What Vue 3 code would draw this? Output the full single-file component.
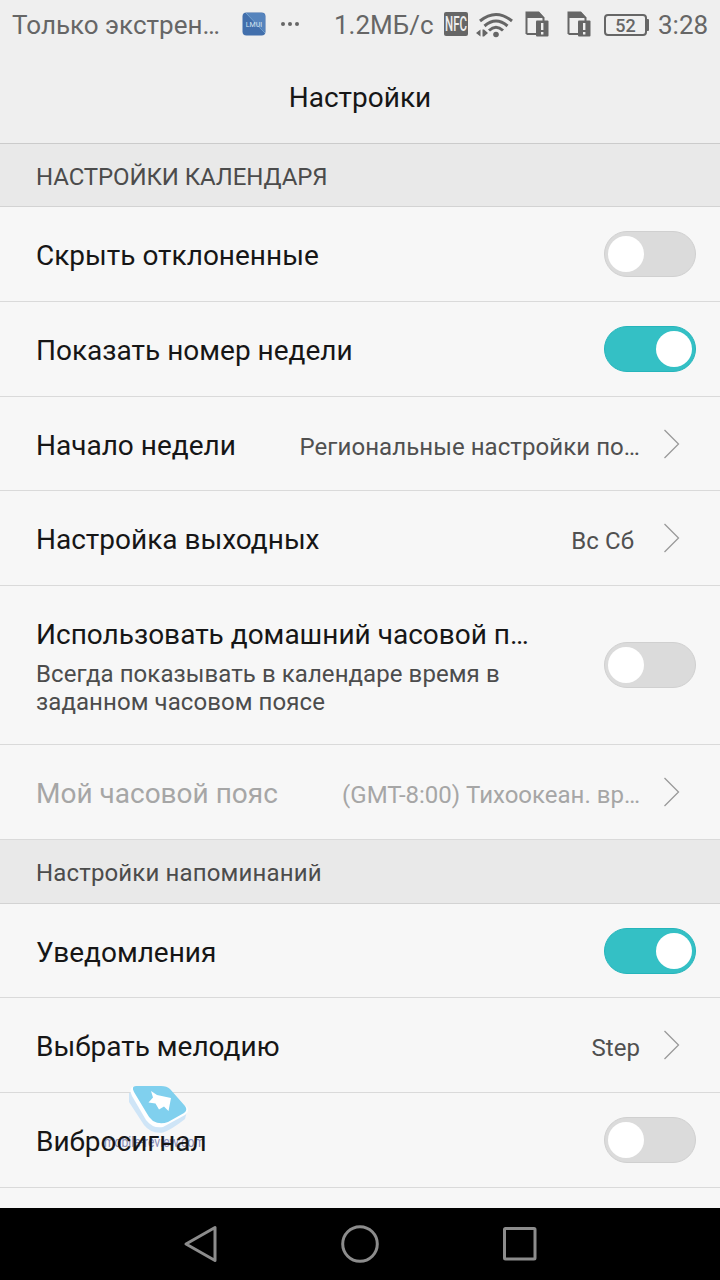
<template>
  <div class="screen">
    <div class="status">
      <span class="carrier">Только экстрен…</span>
      <svg class="app-icon" width="24" height="24" viewBox="0 0 24 24">
        <rect x="0.5" y="0.5" width="23" height="23" rx="4" fill="#426fac" />
        <path d="M4 1H20Q23 1 23 4V20Z" fill="#5684bd" />
        <path d="M4 1L23 21" stroke="#75a4cf" stroke-width="1" />
        <text x="12" y="15" text-anchor="middle" class="app-text">LMUI</text>
      </svg>
      <svg class="dots" width="20" height="6" viewBox="0 0 20 6">
        <circle cx="3" cy="3" r="2" /><circle cx="10" cy="3" r="2" /><circle cx="17" cy="3" r="2" />
      </svg>
      <span class="speed">1.2МБ/с</span>
      <svg class="nfc" width="24" height="24" viewBox="0 0 24 24">
        <rect width="24" height="24" rx="2" fill="#666" />
        <text x="1" y="19" textLength="22" lengthAdjust="spacingAndGlyphs" class="nfc-text">NFC</text>
      </svg>
      <svg class="wifi" width="37" height="26" viewBox="0 0 37 26">
        <g fill="none" stroke="#666" stroke-width="3">
          <path d="M4 9Q20-4 36 9" />
          <path d="M8.500 14Q20 4 31.500 14" />
          <path d="M13 18.500Q20 12 27 18.500" />
        </g>
        <circle cx="20" cy="22.500" r="2.800" fill="#666" />
        <path d="M0 21L4.500 17.500V24.500ZM6.500 17.500H8V17.500L12 21L8 24.500H6.500Z" fill="#666" />
      </svg>
      <svg v-for="n in 2" :key="n" class="sim" width="24" height="26" viewBox="0 0 24 26">
        <path d="M1.500 23V1.500H13.500L18.500 7V10M1.500 23H11" fill="none" stroke="#666" stroke-width="2" />
        <path d="M1 1H14L19.500 7H1Z" fill="#666" />
        <rect x="11" y="9.500" width="12.500" height="16" rx="1" fill="#666" />
        <path d="M17.200 12V19M17.200 21V23.500" stroke="#efefef" stroke-width="2.400" />
      </svg>
      <div class="battery">52</div>
      <span class="clock">3:28</span>
    </div>
    <div class="title">Настройки</div>

    <div v-for="group in groups" :key="group.name">
      <div class="section" :class="{ upper: group.upper }">{{ group.name }}</div>
      <div
        v-for="item in group.items"
        :key="item.label"
        class="row"
        :class="{ short: item.short, tall: item.hint, disabled: item.disabled }"
      >
        <div class="texts">
          <div class="label">{{ item.label }}</div>
          <div v-if="item.hint" class="hint">{{ item.hint }}</div>
          <div v-if="item.value" class="value" :class="{ days: item.days }">{{ item.value }}</div>
        </div>
        <svg v-if="item.value" class="chevron" width="18" height="30" viewBox="0 0 18 30">
          <path d="M1.500 1L15.500 15L1.500 29" fill="none" stroke="#9a9a9a" stroke-width="1.300" />
        </svg>
        <button v-else class="toggle" :class="{ on: item.on }" @click="item.on = !item.on">
          <span class="knob"></span>
        </button>
      </div>
    </div>

    <div class="nav">
      <svg width="34" height="38" viewBox="0 0 34 38">
        <path d="M3 19L32 2.500V35.500Z" />
      </svg>
      <svg width="38" height="38" viewBox="0 0 38 38">
        <circle cx="19" cy="19" r="17.300" />
      </svg>
      <svg width="34" height="34" viewBox="0 0 34 34">
        <rect x="1.500" y="1.500" width="30.500" height="30.500" rx="1" />
      </svg>
    </div>

    <svg class="watermark" width="110" height="72" viewBox="0 0 110 72">
      <path d="M28 9V18L43 41Q50 50 62 48.500Q70 46 84 35L86 27L60 6Z" fill="#cfe5f7" />
      <path d="M31 3Q28 6 31 12L45 36Q52 45 62 43L84 31Q89 27 86 23L60 3Z" fill="#fff" />
      <path d="M35 2H60Q66 2 69 5L84 22Q87 26 83 29L67 38Q59 41 52 37Q48 34 45 28L33 8Q30 2 35 2Z" fill="#80d0ee" />
      <path d="M50 7L56 11L70 14L67.500 27L63 22.500L58 25.500L54.500 19.500L47.500 18.500L52 13.500Z" fill="#fff" />
      <text x="3" y="63" textLength="101" lengthAdjust="spacingAndGlyphs" class="mark-text">mobile-review.com</text>
    </svg>
  </div>
</template>

<script setup>
import { ref } from 'vue'

const groups = ref([
  {
    name: 'НАСТРОЙКИ КАЛЕНДАРЯ',
    upper: true,
    items: [
      { label: 'Скрыть отклоненные', on: false },
      { label: 'Показать номер недели', on: true },
      { label: 'Начало недели', value: 'Региональные настройки по…', short: true },
      { label: 'Настройка выходных', value: 'Вс Сб', days: true },
      {
        label: 'Использовать домашний часовой п…',
        hint: 'Всегда показывать в календаре время в заданном часовом поясе',
        on: false,
      },
      { label: 'Мой часовой пояс', value: '(GMT-8:00) Тихоокеан. вр…', disabled: true },
    ],
  },
  {
    name: 'Настройки напоминаний',
    items: [
      { label: 'Уведомления', on: true, short: true },
      { label: 'Выбрать мелодию', value: 'Step' },
      { label: 'Вибросигнал', on: false },
    ],
  },
])
</script>

<style>
body {
  margin: 0;
  background: #f7f7f7;
}
</style>

<style scoped>
.screen {
  position: relative;
  display: flex;
  flex-direction: column;
  width: 720px;
  height: 1280px;
  overflow: hidden;
  background: #f7f7f7;
  font-family: Roboto, "Noto Sans", sans-serif;
  color: #161616;
}
.status {
  display: flex;
  align-items: center;
  box-sizing: border-box;
  height: 50px;
  padding-left: 12px;
  background: #efefef;
  color: #666;
  font-size: 26px;
  white-space: nowrap;
}
.status svg,
.battery {
  flex: none;
  overflow: visible;
}
.app-icon {
  margin-top: -2px;
}
.carrier {
  width: 230px;
}
.app-text {
  fill: #d5e4f2;
  font-size: 7px;
}
.dots {
  margin-left: 14px;
  margin-top: -2px;
  fill: #666;
}
.speed {
  width: 110px;
  margin-left: 34px;
}
.nfc {
  margin-top: -2px;
}
.nfc-text {
  fill: #efefef;
  font-size: 20px;
  font-weight: 500;
}
.wifi {
  margin-top: -1px;
  margin-left: 8px;
  margin-right: 12px;
}
.sim {
  margin-top: -2px;
  margin-right: 18px;
}
.battery {
  position: relative;
  box-sizing: border-box;
  width: 43px;
  height: 22px;
  margin-left: -5px;
  border: 2px solid #666;
  border-radius: 4px;
  font-size: 18px;
  font-weight: 500;
  line-height: 19px;
  text-align: center;
}
.battery::after {
  content: "";
  position: absolute;
  top: 3px;
  right: -4px;
  width: 3px;
  height: 12px;
  border-radius: 0 1px 1px 0;
  background: #666;
}
.clock {
  margin-left: 11px;
}
.title {
  box-sizing: border-box;
  height: 94px;
  border-bottom: 1px solid #cbcbcb;
  background: #efefef;
  font-size: 28px;
  line-height: 96px;
  text-align: center;
}
.section {
  box-sizing: border-box;
  height: 64px;
  padding-left: 36px;
  border-bottom: 1px solid #d3d3d3;
  background: #e9e9e9;
  color: #4c4c4c;
  font-size: 24px;
  line-height: 66px;
  letter-spacing: 0.15px;
}
.section.upper {
  height: 63px;
  letter-spacing: -0.1px;
}
.row {
  display: flex;
  align-items: center;
  justify-content: space-between;
  box-sizing: border-box;
  height: 95px;
  padding: 0 24px 0 36px;
  border-bottom: 1px solid #dadada;
}
.row.short {
  height: 94px;
}
.row.tall {
  height: 159px;
}
/* names stay above the watermark */
.texts {
  position: relative;
  z-index: 1;
  display: flex;
  flex: 1;
  align-items: baseline;
  justify-content: space-between;
  padding-top: 4px;
  white-space: nowrap;
}
.tall .texts {
  display: block;
  padding-top: 2px;
}
.label {
  font-size: 28px;
  line-height: 38px;
}
.value {
  margin-right: 23px;
  color: #505050;
  font-size: 24px;
  letter-spacing: 0.07px;
}
.value.days {
  margin-right: 29px;
}
.hint {
  width: 500px;
  margin-top: 6px;
  color: #4c4c4c;
  font-size: 24px;
  line-height: 28px;
  letter-spacing: 0.07px;
  white-space: normal;
}
.disabled .label,
.disabled .value {
  color: #a6a6a6;
}
.disabled .value {
  letter-spacing: 0;
}
.chevron {
  margin-right: 15px;
}
.toggle {
  flex: none;
  box-sizing: border-box;
  width: 92px;
  height: 46px;
  padding: 4px 3px;
  border: 1px solid #d0d0d0;
  border-radius: 23px;
  background: #dbdbdb;
}
.toggle.on {
  border-color: #25b5bb;
  background: #34c0c5;
}
.knob {
  display: block;
  width: 36px;
  height: 36px;
  border-radius: 50%;
  background: #fff;
}
.on .knob {
  margin-left: auto;
}
.nav {
  display: flex;
  align-items: center;
  justify-content: space-between;
  box-sizing: border-box;
  height: 72px;
  margin-top: auto;
  padding: 0 183px;
  background: #000;
}
.nav svg {
  fill: none;
  stroke: #8c8c8c;
  stroke-width: 3;
  stroke-linejoin: round;
}
.watermark {
  position: absolute;
  top: 1084px;
  left: 101px;
  overflow: visible;
  pointer-events: none;
}
.mark-text {
  fill: #6b70a8;
  font-size: 14px;
  opacity: 0.8;
}
</style>
